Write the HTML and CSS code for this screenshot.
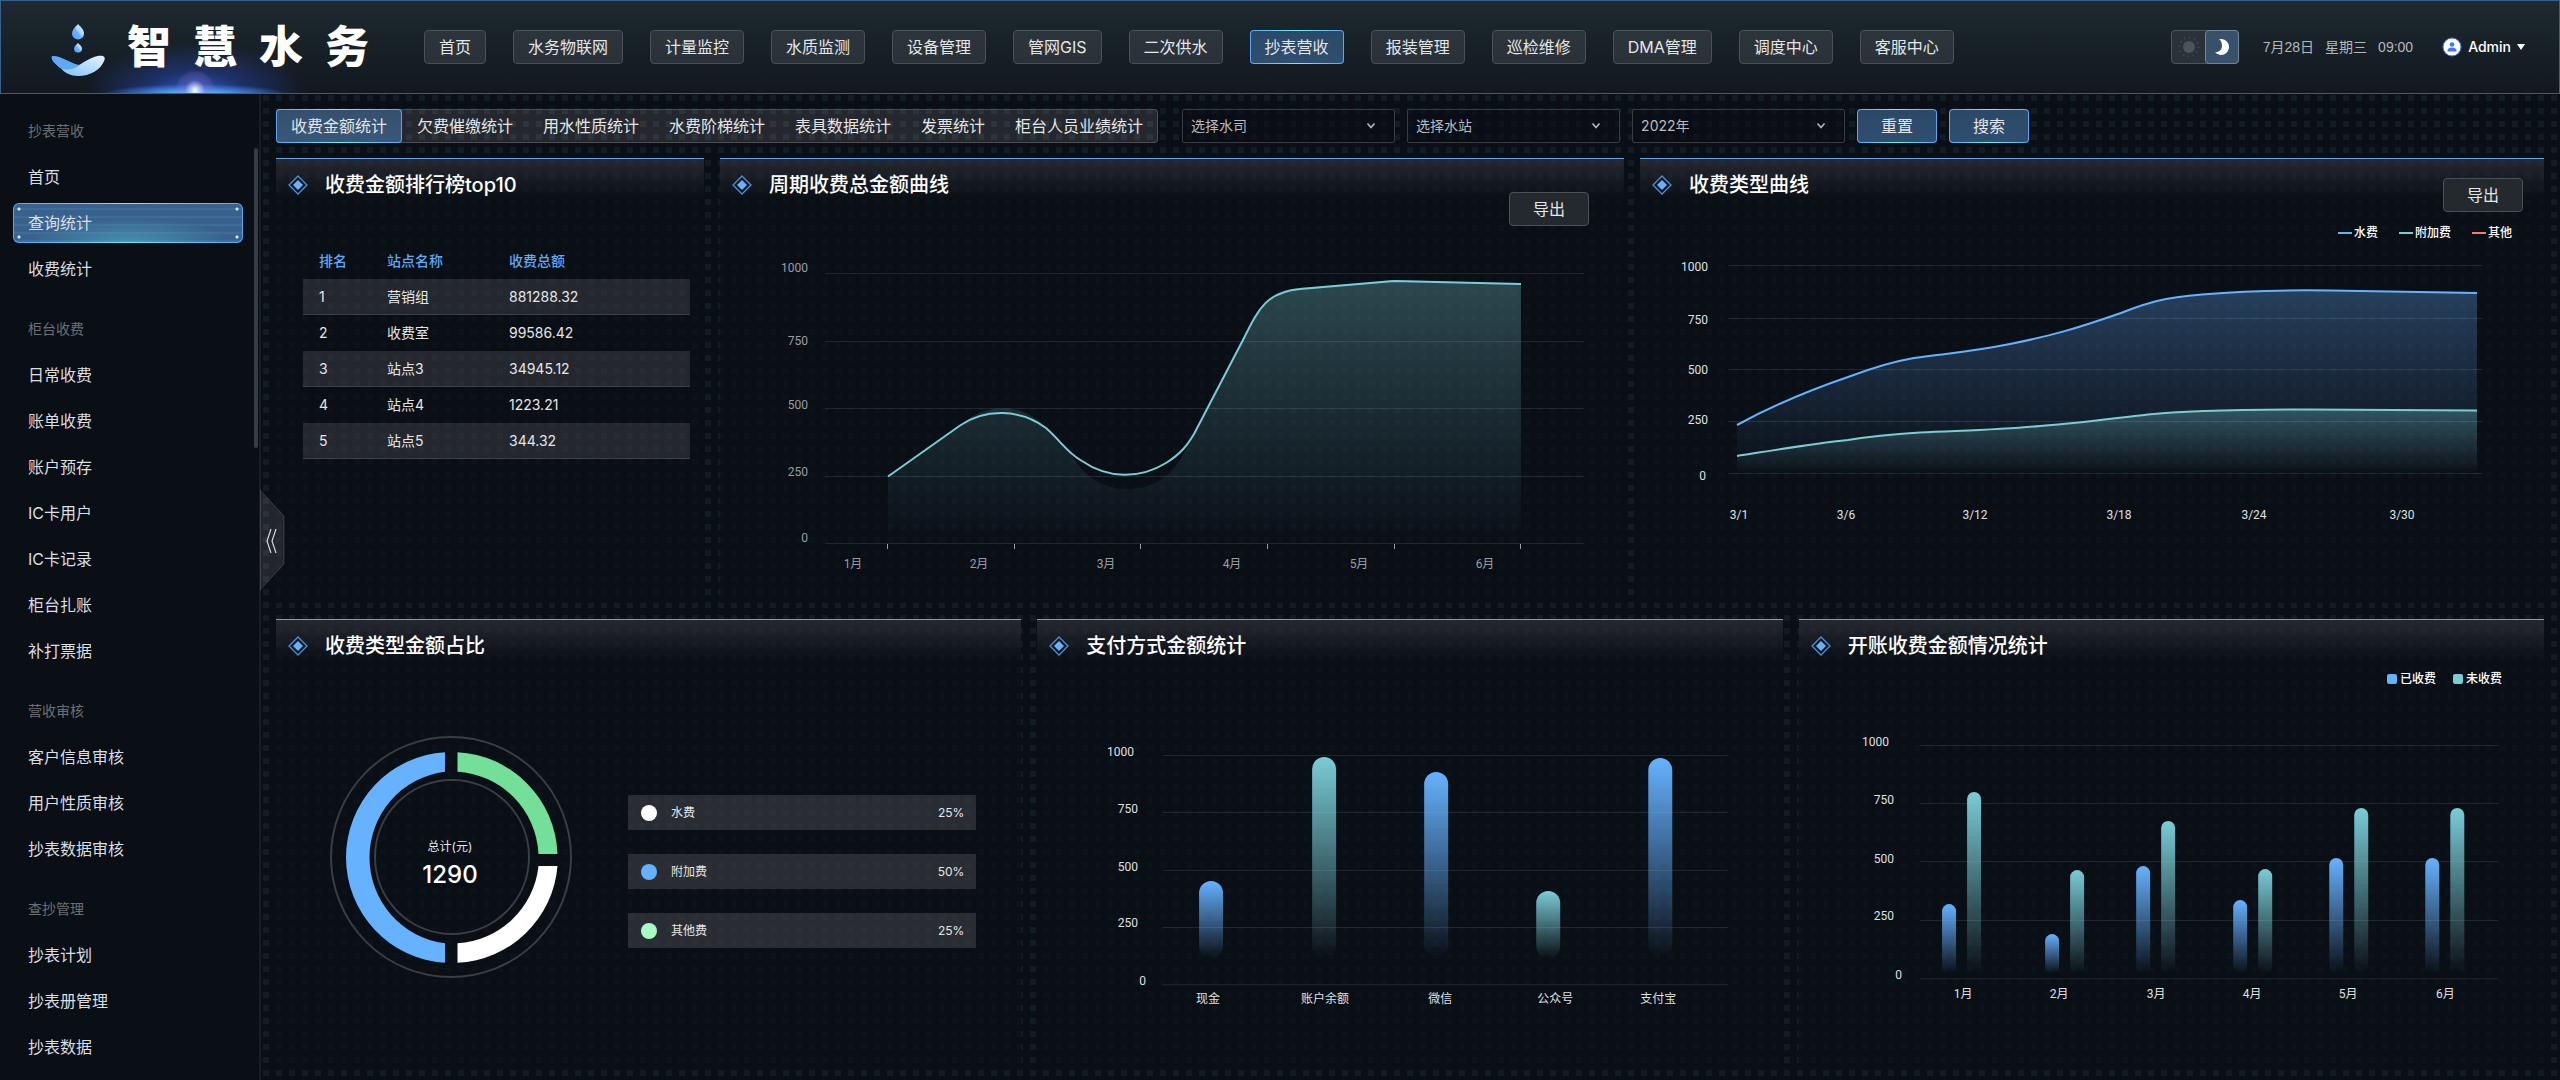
FILE: index.html
```html
<!DOCTYPE html>
<html lang="zh-CN">
<head>
<meta charset="utf-8">
<title>智慧水务</title>
<link rel="stylesheet" href="styles.css">
</head>
<body>
<svg class="defs" aria-hidden="true">
  <defs>
    <symbol id="diamond" viewBox="0 0 20 20">
      <path d="M10 1 19 10 10 19 1 10Z" fill="none" stroke="#4d92d8" stroke-width="1.3"/>
      <path d="M10 5 15 10 10 15 5 10Z" fill="#66b2ff"/>
    </symbol>
    <symbol id="chevron" viewBox="0 0 10 8">
      <path d="M1.5 1.5 5 5.5 8.5 1.5" fill="none" stroke="#b4b7ba" stroke-width="1.6"/>
    </symbol>
    <linearGradient id="bar-blue" x1="0" y1="0" x2="0" y2="1">
      <stop offset="0" stop-color="#66b2ff"/><stop offset="1" stop-color="#66b2ff" stop-opacity="0"/>
    </linearGradient>
    <linearGradient id="bar-teal" x1="0" y1="0" x2="0" y2="1">
      <stop offset="0" stop-color="#7accd6"/><stop offset="1" stop-color="#7accd6" stop-opacity="0"/>
    </linearGradient>
    <linearGradient id="area-blue" x1="0" y1="0" x2="0" y2="1">
      <stop offset="0" stop-color="#66b2ff" stop-opacity=".3"/><stop offset="1" stop-color="#66b2ff" stop-opacity="0"/>
    </linearGradient>
    <linearGradient id="area-teal" x1="0" y1="0" x2="0" y2="1">
      <stop offset="0" stop-color="#7accd6" stop-opacity=".3"/><stop offset="1" stop-color="#7accd6" stop-opacity="0"/>
    </linearGradient>
  </defs>
</svg>

<header class="topbar">
  <div class="brand">
    <svg class="brand-mark" viewBox="0 0 56 54" aria-hidden="true">
      <defs>
        <linearGradient id="drop" x1="0" y1="1" x2="1" y2="0"><stop offset="0" stop-color="#4f9dfc"/><stop offset=".45" stop-color="#69b1ff"/><stop offset=".55" stop-color="#a6d4ff"/><stop offset="1" stop-color="#dff1ff"/></linearGradient>
        <linearGradient id="bowl" x1="0" y1="1" x2="1" y2="0"><stop offset="0" stop-color="#7fc0ff"/><stop offset="1" stop-color="#e4f4ff"/></linearGradient>
      </defs>
      <path d="M28 0C31 3 34 6 34 9.500A6 6 0 0 1 22 9.500C22 6 25 3 28 0Z" fill="url(#drop)"/>
      <path d="M28 19C30 21 32 22.500 32 24.500A4 4 0 0 1 24 24.500C24 22.500 26 21 28 19Z" fill="url(#drop)"/>
      <path d="M10 43C24 49 32 37 44 33C50 31 56 31 54.500 36C51 46 40 52 28 52C21 52 14 49 10 43Z" fill="url(#bowl)"/>
      <path d="M2 32C10 31 18 38 29 41C23 47 14 46 10 44C5 40 0 35 2 32Z" fill="#5fa9fb"/>
    </svg>
    <h1 class="brand-name"><span>智</span><span>慧</span><span>水</span><span>务</span></h1>
  </div>
  <nav class="mainnav">
    <button class="btn">首页</button>
    <button class="btn">水务物联网</button>
    <button class="btn">计量监控</button>
    <button class="btn">水质监测</button>
    <button class="btn">设备管理</button>
    <button class="btn">管网GIS</button>
    <button class="btn">二次供水</button>
    <button class="btn btn-active">抄表营收</button>
    <button class="btn">报装管理</button>
    <button class="btn">巡检维修</button>
    <button class="btn">DMA管理</button>
    <button class="btn">调度中心</button>
    <button class="btn">客服中心</button>
  </nav>
  <div class="status">
    <div class="theme">
      <button class="theme-btn" aria-label="浅色">
        <svg width="22" height="22" viewBox="0 0 22 22"><circle cx="11" cy="11" r="6" fill="#4c5359"/><circle cx="11" cy="11" r="9.500" fill="none" stroke="#444b51" stroke-width="2.400" stroke-dasharray="1 3.974"/></svg>
      </button>
      <button class="theme-btn theme-on" aria-label="深色">
        <svg width="18" height="18" viewBox="0 0 18 18"><path d="M6 1.200A8 8 0 1 1 2 14.200C5 14.600 9 12.500 9 7.500C9 4.500 7.800 2.500 6 1.200Z" fill="#fff"/></svg>
      </button>
    </div>
    <div class="clock"><span>7月28日</span><span>星期三</span><span>09:00</span></div>
    <button class="user">
      <svg width="20" height="20" viewBox="0 0 20 20" aria-hidden="true"><circle cx="10" cy="10" r="9" fill="#fff" stroke="#3d6fe0" stroke-width="1"/><circle cx="10" cy="7.500" r="2.300" fill="#3d76ff"/><path d="M5.500 14.500C5.500 11.500 7 10.500 10 10.500S14.500 11.500 14.500 14.500Z" fill="#3d76ff"/></svg>
      <span>Admin</span>
      <svg width="8" height="6" viewBox="0 0 8 6" aria-hidden="true"><path d="M0 0H8L4 6Z" fill="#fff"/></svg>
    </button>
  </div>
</header>

<div class="shell">
  <aside class="sidebar">
    <h2 class="side-title">抄表营收</h2>
    <a class="side-link" href="#">首页</a>
    <a class="side-link side-active" href="#">查询统计</a>
    <a class="side-link" href="#">收费统计</a>
    <h2 class="side-title">柜台收费</h2>
    <a class="side-link" href="#">日常收费</a>
    <a class="side-link" href="#">账单收费</a>
    <a class="side-link" href="#">账户预存</a>
    <a class="side-link" href="#">IC卡用户</a>
    <a class="side-link" href="#">IC卡记录</a>
    <a class="side-link" href="#">柜台扎账</a>
    <a class="side-link" href="#">补打票据</a>
    <h2 class="side-title">营收审核</h2>
    <a class="side-link" href="#">客户信息审核</a>
    <a class="side-link" href="#">用户性质审核</a>
    <a class="side-link" href="#">抄表数据审核</a>
    <h2 class="side-title">查抄管理</h2>
    <a class="side-link" href="#">抄表计划</a>
    <a class="side-link" href="#">抄表册管理</a>
    <a class="side-link" href="#">抄表数据</a>
    <span class="side-scroll"></span>
    <button class="collapse" aria-label="收起菜单">
      <svg width="25" height="100" viewBox="0 0 25 100"><path d="M0 0 24 26V74L0 100Z" fill="#fff" fill-opacity=".1" stroke="#fff" stroke-opacity=".14"/><path d="M11 39 7 51 11 63M16 39 12 51 16 63" fill="none" stroke="#d5d8da" stroke-width="1.200"/></svg>
    </button>
  </aside>

  <main class="main">
    <div class="filters">
      <div class="tabs">
        <button class="tab tab-active">收费金额统计</button>
        <button class="tab">欠费催缴统计</button>
        <button class="tab">用水性质统计</button>
        <button class="tab">水费阶梯统计</button>
        <button class="tab">表具数据统计</button>
        <button class="tab">发票统计</button>
        <button class="tab">柜台人员业绩统计</button>
      </div>
      <div class="fields">
        <div class="field"><select aria-label="水司"><option>选择水司</option></select><svg class="field-arrow"><use href="#chevron"/></svg></div>
        <div class="field"><select aria-label="水站"><option>选择水站</option></select><svg class="field-arrow"><use href="#chevron"/></svg></div>
        <div class="field"><select aria-label="年份"><option>2022年</option></select><svg class="field-arrow"><use href="#chevron"/></svg></div>
        <button class="btn btn-wide btn-active">重置</button>
        <button class="btn btn-wide btn-active">搜索</button>
      </div>
    </div>

    <div class="row row-top">
      <section class="panel">
        <div class="panel-head"><h2 class="panel-title"><svg class="gem"><use href="#diamond"/></svg>收费金额排行榜top10</h2></div>
        <table class="rank">
          <thead><tr><th class="c-rank">排名</th><th class="c-name">站点名称</th><th>收费总额</th></tr></thead>
          <tbody>
            <tr><td>1</td><td>营销组</td><td>881288.32</td></tr>
            <tr><td>2</td><td>收费室</td><td>99586.42</td></tr>
            <tr><td>3</td><td>站点3</td><td>34945.12</td></tr>
            <tr><td>4</td><td>站点4</td><td>1223.21</td></tr>
            <tr><td>5</td><td>站点5</td><td>344.32</td></tr>
          </tbody>
        </table>
      </section>

      <section class="panel">
        <div class="panel-head"><h2 class="panel-title"><svg class="gem"><use href="#diamond"/></svg>周期收费总金额曲线</h2><button class="btn btn-wide export-low">导出</button></div>
        <svg class="chart chart-dim" viewBox="0 0 904 360">
          <path class="grid" d="M105 47.500H864M105 115.500H864M105 182.500H864M105 250.500H864M105 317.500H864"/>
          <path d="M168 250.500L240 199.500C266 176 303 176 326 202L348 222C372 275 434 275 460 234L474 208L524 112C538 82 546 65 580 62L674 54L801 58V318H168Z" fill="url(#area-teal)"/>
          <path class="line teal" d="M168 250.500L240 199.500C266 182 300 183 326 202C342 216 346 226 362 235C388 253 420 253 446 237C462 227 468 218 474 208L524 112C538 84 546 66 580 63L674 55L801 58"/>
          <path class="tick" d="M167.500 318V323M294.500 318V323M420.500 318V323M547.500 318V323M674.500 318V323M800.500 318V323"/>
          <g class="ylab"><text x="88" y="46">1000</text><text x="88" y="119">750</text><text x="88" y="183">500</text><text x="88" y="250">250</text><text x="88" y="316">0</text></g>
          <g class="xlab"><text x="133" y="342">1月</text><text x="259" y="342">2月</text><text x="386" y="342">3月</text><text x="512" y="342">4月</text><text x="639" y="342">5月</text><text x="765" y="342">6月</text></g>
        </svg>
      </section>

      <section class="panel">
        <div class="panel-head"><h2 class="panel-title"><svg class="gem"><use href="#diamond"/></svg>收费类型曲线</h2><button class="btn btn-wide export-high">导出</button></div>
        <ul class="legend legend-lines">
          <li><i class="dash bg-blue"></i>水费</li><li><i class="dash bg-teal"></i>附加费</li><li><i class="dash bg-coral"></i>其他</li>
        </ul>
        <svg class="chart" viewBox="0 0 904 340">
          <path class="grid" d="M88 22.500H843M88 75.500H843M88 126.500H843M88 178.500H843M88 230.500H843"/>
          <path d="M97 182C130 164 170 147 208 134C232 125 250 119 274 115C310 110 330 109 370 101C410 93 435 86 478 71C500 63 515 55 562 51.500C610 47.500 660 47 690 47.500C740 48 790 49.500 837 50V231H97Z" fill="url(#area-blue)"/>
          <path d="M97 213C135 207 170 201 208 197C232 193 256 191 280 189.500C320 187.500 360 187 400 183C440 180 470 176 508 171.500C540 168 610 166.500 670 166.500L837 167.500V231H97Z" fill="url(#area-teal)"/>
          <path class="line blue" d="M97 182C130 164 170 147 208 134C232 125 250 119 274 115C310 110 330 109 370 101C410 93 435 86 478 71C500 63 515 55 562 51.500C610 47.500 660 47 690 47.500C740 48 790 49.500 837 50"/>
          <path class="line teal" d="M97 213C135 207 170 201 208 197C232 193 256 191 280 189.500C320 187.500 360 187 400 183C440 180 470 176 508 171.500C540 168 610 166.500 670 166.500L837 167.500"/>
          <g class="ylab"><text x="68" y="28">1000</text><text x="68" y="81">750</text><text x="68" y="131">500</text><text x="68" y="181">250</text><text x="66" y="237">0</text></g>
          <g class="xlab"><text x="99" y="276">3/1</text><text x="206" y="276">3/6</text><text x="335" y="276">3/12</text><text x="479" y="276">3/18</text><text x="614" y="276">3/24</text><text x="762" y="276">3/30</text></g>
        </svg>
      </section>
    </div>

    <div class="row row-bottom">
      <section class="panel">
        <div class="panel-head"><h2 class="panel-title"><svg class="gem"><use href="#diamond"/></svg>收费类型金额占比</h2></div>
        <div class="share">
          <svg class="donut" viewBox="0 0 242 242">
            <circle cx="121" cy="121" r="120" fill="none" stroke="#3a3e42" stroke-width="2"/>
            <circle cx="122" cy="121" r="77" fill="none" stroke="#3a3e42" stroke-width="2"/>
            <path d="M115 16.200A105.500 105.500 0 0 0 115 226.800V207.300A86.500 86.500 0 0 1 115 35.700Z" fill="#66b2ff"/>
            <path d="M127.500 16.200A105.500 105.500 0 0 1 227.500 118H208.500A86.500 86.500 0 0 0 127.500 35.700Z" fill="#74df99"/>
            <path d="M127.500 226.800A105.500 105.500 0 0 0 227.500 130H208.500A86.500 86.500 0 0 1 127.500 207.300Z" fill="#fff"/>
            <text class="donut-cap" x="120" y="115">总计(元)</text>
            <text class="donut-num" x="120" y="147">1290</text>
          </svg>
          <ul class="share-list">
            <li><i class="dot bg-white"></i>水费<b>25%</b></li>
            <li><i class="dot bg-blue"></i>附加费<b>50%</b></li>
            <li><i class="dot bg-mint"></i>其他费<b>25%</b></li>
          </ul>
        </div>
      </section>

      <section class="panel">
        <div class="panel-head"><h2 class="panel-title"><svg class="gem"><use href="#diamond"/></svg>支付方式金额统计</h2></div>
        <svg class="chart" viewBox="0 0 745 380">
          <path class="grid" d="M126 86.500H691M126 143.500H691M126 201.500H691M126 258.500H691M126 315.500H691"/>
          <g fill="url(#bar-blue)"><rect x="162" y="212" width="24" height="77" rx="12"/><rect x="387" y="103" width="24" height="186" rx="12"/><rect x="611" y="89" width="24" height="200" rx="12"/></g>
          <g fill="url(#bar-teal)"><rect x="275" y="88" width="24" height="201" rx="12"/><rect x="499" y="222" width="24" height="67" rx="12"/></g>
          <g class="ylab"><text x="97" y="87">1000</text><text x="101" y="144">750</text><text x="101" y="202">500</text><text x="101" y="258">250</text><text x="109" y="316">0</text></g>
          <g class="xlab"><text x="171" y="334">现金</text><text x="288" y="334">账户余额</text><text x="403" y="334">微信</text><text x="518" y="334">公众号</text><text x="621" y="334">支付宝</text></g>
        </svg>
      </section>

      <section class="panel">
        <div class="panel-head"><h2 class="panel-title"><svg class="gem"><use href="#diamond"/></svg>开账收费金额情况统计</h2></div>
        <ul class="legend legend-bars">
          <li><i class="square bg-blue"></i>已收费</li><li><i class="square bg-teal"></i>未收费</li>
        </ul>
        <svg class="chart" viewBox="0 0 745 360">
          <path class="grid" d="M121 56.500H699M121 114.500H699M121 172.500H699M121 231.500H699M121 289.500H699"/>
          <g fill="url(#bar-blue)"><rect x="143" y="215" width="14" height="69" rx="7"/><rect x="246" y="245" width="14" height="39" rx="7"/><rect x="337" y="177" width="14" height="107" rx="7"/><rect x="434" y="211" width="14" height="73" rx="7"/><rect x="530" y="169" width="14" height="115" rx="7"/><rect x="626" y="169" width="14" height="115" rx="7"/></g>
          <g fill="url(#bar-teal)"><rect x="168" y="103" width="14" height="181" rx="7"/><rect x="271" y="181" width="14" height="103" rx="7"/><rect x="362" y="132" width="14" height="152" rx="7"/><rect x="459" y="180" width="14" height="104" rx="7"/><rect x="555" y="119" width="14" height="165" rx="7"/><rect x="651" y="119" width="14" height="165" rx="7"/></g>
          <g class="ylab"><text x="90" y="57">1000</text><text x="95" y="115">750</text><text x="95" y="174">500</text><text x="95" y="231">250</text><text x="103" y="290">0</text></g>
          <g class="xlab"><text x="164" y="309">1月</text><text x="260" y="309">2月</text><text x="357" y="309">3月</text><text x="453" y="309">4月</text><text x="549" y="309">5月</text><text x="646" y="309">6月</text></g>
        </svg>
      </section>
    </div>
  </main>
</div>
</body>
</html>
```

FILE: styles.css
```css
* { box-sizing: border-box; }

body {
  margin: 0;
  min-height: 100vh;
  display: flex;
  flex-direction: column;
  background: #0a0e15;
  color: #e4e6e8;
  font: 16px/20px Inter, "Noto Sans CJK SC", sans-serif;
}

h1, h2, ul { margin: 0; padding: 0; list-style: none; }
button, select { font: inherit; color: inherit; margin: 0; }
button { cursor: pointer; white-space: nowrap; }
.defs { position: absolute; width: 0; height: 0; }

/* Buttons */
.btn {
  height: 34px;
  padding: 0 14px;
  border: 1px solid #4a5157;
  border-radius: 4px;
  background: linear-gradient(#2d353c, #2a3138);
}
.btn-wide { width: 80px; padding: 0; background: #24292d; }
.btn-active {
  border-color: transparent;
  background:
    linear-gradient(#2b4868, #2f4f70) padding-box,
    linear-gradient(90deg, #5aa5f7, #6df0f5 50%, #5aa5f7) border-box;
}

/* Top bar */
.topbar {
  display: flex;
  align-items: center;
  height: 94px;
  padding: 0 34px 0 49px;
  border: 1px solid #36618f;
  background:
    radial-gradient(circle 20px at 194px 89px, #fff 0, rgba(225, 225, 255, .7) 20%, rgba(140, 120, 230, .3) 50%, rgba(140, 110, 200, .2) 88%, transparent),
    radial-gradient(ellipse 92px 10px at 194px 93px, rgba(110, 225, 255, .9), rgba(70, 150, 255, .6) 60%, transparent),
    radial-gradient(ellipse 112px 52px at 194px 94px, rgba(55, 105, 235, .85), rgba(42, 75, 190, .45) 45%, transparent),
    linear-gradient(#1e2930, #12181f);
}
.brand { display: flex; align-items: center; gap: 21px; width: 374px; }
.brand-mark { width: 56px; height: 54px; margin-top: 8px; }
.brand-name {
  display: flex;
  gap: 22px;
  color: #fff;
  font-size: 44px;
  line-height: 48px;
  font-weight: 900;
}
.mainnav { display: flex; gap: 27px; flex: 1; }
.status { display: flex; align-items: center; }
.theme {
  display: flex;
  height: 34px;
  border: 1px solid #4c555c;
  border-radius: 4px;
  background: #2a3138;
}
.theme-btn {
  display: grid;
  place-items: center;
  width: 34px;
  padding: 0;
  border: 0;
  background: none;
}
.theme-on {
  margin: -1px;
  border: 1px solid #718599;
  border-radius: 4px;
  background: #38506a;
}
.clock {
  display: flex;
  gap: 11px;
  margin-left: 24px;
  color: #b3b8bc;
  font-family: "Liberation Sans", "Noto Sans CJK SC", sans-serif;
  font-size: 14px;
}
.user {
  display: flex;
  align-items: center;
  gap: 6px;
  margin-left: 29px;
  padding: 0;
  border: 0;
  background: none;
  color: #fff;
  font-size: 14px;
  font-weight: 500;
}

/* Sidebar */
.shell { display: flex; flex: 1; }
.sidebar {
  position: relative;
  flex: none;
  width: 261px;
  border-right: 2px solid #191e25;
  background: #0a0f16;
}
.side-title {
  height: 46px;
  margin-top: 17px;
  padding-left: 28px;
  color: #6c7074;
  font-size: 14px;
  line-height: 46px;
  font-weight: 400;
}
.side-title:first-child { margin-top: 14px; }
.side-link {
  display: block;
  height: 40px;
  margin: 6px 16px 0 13px;
  padding-left: 15px;
  color: #dcdee0;
  line-height: 40px;
  text-decoration: none;
}
.side-title + .side-link { margin-top: 3px; }
.side-active {
  padding-left: 14px;
  border: 1px solid transparent;
  border-radius: 6px;
  line-height: 38px;
  background:
    radial-gradient(circle at 5px 5px, #d9ecff 1px, transparent 2px) padding-box,
    radial-gradient(circle at calc(100% - 5px) 5px, #d9ecff 1px, transparent 2px) padding-box,
    radial-gradient(circle at 5px calc(100% - 5px), #d9ecff 1px, transparent 2px) padding-box,
    radial-gradient(circle at calc(100% - 5px) calc(100% - 5px), #d9ecff 1px, transparent 2px) padding-box,
    radial-gradient(ellipse 100px 24px at 50% 100%, rgba(90, 200, 215, .45), transparent) padding-box,
    repeating-linear-gradient(#38628d 0 4px, #3f6c98 4px 6px, #38628d 6px 8px) padding-box,
    linear-gradient(90deg, #5aa5f7, #6df0f5 50%, #5aa5f7) border-box;
}
.side-scroll {
  position: absolute;
  top: 54px;
  right: 1px;
  width: 4px;
  height: 300px;
  border-radius: 2px;
  background: #343c45;
}
.collapse {
  position: absolute;
  z-index: 1;
  top: 396px;
  left: 260px;
  height: 100px;
  padding: 0;
  border: 0;
  background: none;
}

/* Main area */
.main {
  flex: 1;
  min-width: 0;
  display: flex;
  flex-direction: column;
  gap: 16px;
  padding: 15px 16px 16px 15px;
  background:
    linear-gradient(transparent 6px, #0a0e15 6px) 2px 1px / 13px 13px,
    linear-gradient(90deg, #121c25 6px, #0a0e15 6px) 2px 1px / 13px 13px;
}
.filters { display: flex; gap: 24px; height: 34px; margin-bottom: -1px; }
.tabs {
  display: flex;
  border-radius: 4px;
  background: rgba(255, 255, 255, .11);
  box-shadow: inset 0 0 0 1px #4a4e52;
}
.tab { padding: 0 14px; border: 1px solid transparent; background: none; border-radius: 4px; }
.tab-active {
  background:
    linear-gradient(#35506e, #38587a) padding-box,
    linear-gradient(90deg, #5aa5f7, #6df0f5 50%, #5aa5f7) border-box;
}
.fields { display: flex; gap: 12px; }
.field { display: grid; width: 213px; }
.field > * { grid-area: 1 / 1; }
.field select {
  width: 100%;
  padding: 0 8px;
  border: 1px solid #373c42;
  border-radius: 2px;
  background: rgba(10, 14, 21, .6);
  color: #b9bcbf;
  font-size: 14px;
  appearance: none;
}
.field-arrow {
  width: 10px;
  height: 8px;
  margin-right: 19px;
  place-self: center end;
  pointer-events: none;
}

.row { display: grid; flex: 1 0 445px; gap: 16px; }
.row-top { grid-template-columns: 428fr 904fr 904fr; }
.row-bottom { grid-template-columns: repeat(3, 1fr); }

.panel {
  min-width: 0;
  border-top: 1px solid #5fa6ee;
  background:
    linear-gradient(rgba(255, 255, 255, .11), transparent) 0 0 / 100% 40px no-repeat,
    rgba(10, 14, 21, .7);
}
.panel-head {
  display: flex;
  justify-content: space-between;
  align-items: flex-start;
  min-height: 49px;
}
.panel-title {
  display: flex;
  align-items: center;
  gap: 17px;
  padding: 14px 0 0 12px;
  color: #fff;
  font-size: 20px;
  line-height: 24px;
  font-weight: 500;
}
.gem { width: 20px; height: 20px; }
.export-low { margin: 33px 35px 0 0; }
.export-high { margin: 19px 21px 0 0; }

/* Ranking table */
.rank {
  width: calc(100% - 41px);
  margin: 35px 14px 0 27px;
  border-collapse: collapse;
  table-layout: fixed;
  font-size: 14px;
}
.rank th, .rank td { height: 36px; padding: 0 0 0 16px; text-align: left; }
.rank th { color: #5fabf7; font-weight: 500; }
.rank .c-rank { width: 68px; }
.rank .c-name { width: 122px; }
.rank tbody tr:nth-child(odd) {
  background: rgba(255, 255, 255, .11);
  box-shadow: inset 0 -1px #3c4146;
}

/* Legends */
.legend {
  display: flex;
  justify-content: flex-end;
  color: #fff;
  font-size: 12px;
  font-weight: 500;
}
.legend li { display: flex; align-items: center; }
.legend-lines { gap: 21px; margin-top: 11px; padding-right: 32px; }
.legend-lines li { gap: 2px; }
.legend-bars { gap: 17px; padding-right: 42px; }
.legend-bars li { gap: 3px; }
.dash { width: 14px; height: 2px; }
.square { width: 10px; height: 10px; border-radius: 2px; }
.dot { width: 16px; height: 16px; border-radius: 50%; }
.bg-blue { background: #66b2ff; }
.bg-teal { background: #7accd6; }
.bg-coral { background: #f08068; }
.bg-mint { background: #a8f9c4; }
.bg-white { background: #fff; }

/* Charts */
.chart {
  display: block;
  width: 100%;
  fill: #dfe1e3;
  font: 12px Roboto, "Noto Sans CJK SC", sans-serif;
}
.chart-dim { fill: #9b9fa3; }
.grid { fill: none; stroke: #fff; stroke-opacity: .1; }
.tick { fill: none; stroke: #9b9fa3; }
.line { fill: none; stroke-width: 2; }
.blue { stroke: #66b2ff; }
.teal { stroke: #7accd6; }
.ylab { text-anchor: end; }
.xlab { text-anchor: middle; }

/* Share of fee types */
.share { display: flex; gap: 56px; padding: 67px 45px 0 54px; }
.donut { flex: none; width: 242px; height: 242px; text-anchor: middle; }
.donut-cap { fill: #e4e6e8; font-size: 12px; }
.donut-num { fill: #fff; font-size: 24px; font-weight: 500; }
.share-list { display: flex; flex: 1; flex-direction: column; gap: 24px; padding-top: 59px; }
.share-list li {
  display: flex;
  align-items: center;
  gap: 14px;
  height: 35px;
  padding: 0 12px 0 13px;
  background: rgba(255, 255, 255, .13);
  font-size: 12px;
}
.share-list b { margin-left: auto; font-weight: 400; }
```
